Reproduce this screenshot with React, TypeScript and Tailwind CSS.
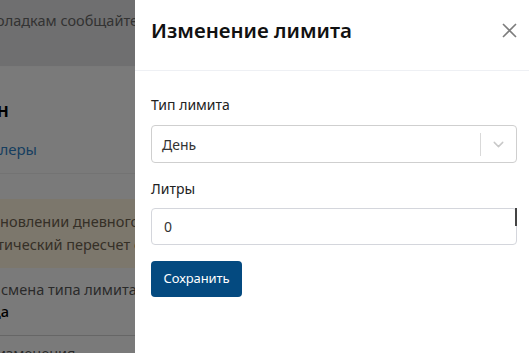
import { ChevronDown } from 'lucide-react';

export default function App() {
  return (
    <div className="relative w-[529px] h-[353px] overflow-hidden bg-[#f5f5f5] font-['Noto_Sans',sans-serif]">
      {/* page behind the drawer */}
      <div className="flex flex-col w-[529px]">
        <div className="h-[67px] bg-[#dfdfe0] border-b border-[#f2f2f2] pt-[10px] whitespace-nowrap">
          <div className="w-[138px] flex justify-end text-[14.5px] text-[#666]">
            По всем вопросам и неполадкам сообщайте
          </div>
        </div>
        <div className="h-[107px] bg-[#f5f5f5] border-b border-[#e6e6e6] whitespace-nowrap">
          <div className="w-[9px] flex justify-end pt-[29px] text-[19px] font-semibold text-black">Клиент: Иванов Иван</div>
          <div className="w-[37px] flex justify-end pt-[13px] text-[15px] text-[#2f7dc0]">Все дилеры</div>
        </div>
        <div className="pt-[25px] bg-[#f5f5f5]">
          <div className="h-[69px] bg-[#f9eed8] pt-[11px] text-[14.5px] leading-[23px] text-[#6b604e] whitespace-nowrap">
            <div className="-ml-[61px]">При установлении дневного лимита</div>
            <div className="-ml-[53px]">автоматический пересчет состоится</div>
          </div>
        </div>
        <div className="h-[68px] bg-[#f5f5f5] border-b border-[#cccccc] pt-[10px] whitespace-nowrap">
          <div className="-ml-[80px] text-[14.5px] text-[#555] leading-[22px]">Последняя смена типа лимита</div>
          <div className="w-[9px] flex justify-end text-[14.5px] font-medium text-black leading-[22px]">Никогда</div>
        </div>
        <div className="pt-[6px] whitespace-nowrap">
          <div className="-ml-[40px] text-[14.5px] text-[#555] leading-[22px]">Дата изменения</div>
        </div>
      </div>
      <div className="absolute inset-0 bg-black/50" />

      {/* drawer */}
      <div className="absolute top-0 right-0 bottom-0 w-[394px] bg-white flex flex-col">
        <div className="h-[71px] border-b border-[#eef0f4] flex items-center justify-between pl-[16px] pr-[12px] pb-[9px]">
          <h2 className="text-[20.5px] font-semibold text-[#111]">Изменение лимита</h2>
          <svg width="15" height="15" viewBox="0 0 15 15" className="text-[#7d7d7d]">
            <path d="M1 1L14 14M14 1L1 14" stroke="currentColor" strokeWidth="1.6" fill="none" />
          </svg>
        </div>
        <div className="pl-[16px] pr-[12px] pt-[24px] flex flex-col">
          <label className="text-[14px] text-[#222] leading-[20px]">Тип лимита</label>
          <div className="mt-[10px] h-[38px] border border-[#cfcfcf] rounded-[4px] flex items-center">
            <span className="flex-1 pl-[10px] text-[14px] text-[#333]">День</span>
            <span className="w-px h-[23px] bg-[#d9d9d9]" />
            <span className="w-[35px] flex justify-center">
              <ChevronDown className="w-[17px] h-[17px] text-[#c8c8c8]" strokeWidth={2} />
            </span>
          </div>
          <label className="mt-[16px] text-[14px] text-[#222] leading-[20px]">Литры</label>
          <div className="relative mt-[9px] h-[37px] border border-[#d4d6dc] rounded-[4px] flex items-center pl-[12px] text-[14px] text-[#333]">
            0
            <span className="absolute -right-px -top-px w-[2px] h-[18px] bg-[#444]" />
          </div>
          <div className="mt-[16px]">
            <button className="h-[36px] w-[91px] rounded-[4px] bg-[#044a80] text-white text-[13px] tracking-[-0.1px]">
              Сохранить
            </button>
          </div>
        </div>
      </div>
    </div>
  );
}
